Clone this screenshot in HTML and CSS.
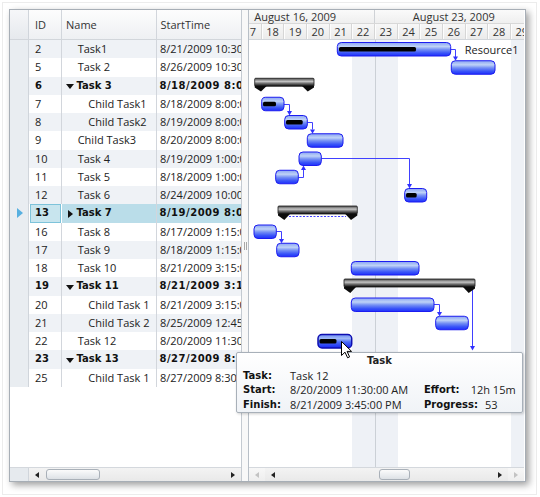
FILE: index.html
```html
<!DOCTYPE html>
<html>
<head>
<meta charset="utf-8">
<link rel="stylesheet" href="styles.css">
</head>
<body>
<div class="page">
  <div class="frame">
    <div class="grid-pane">
      <div class="grid-head">
        <div class="c-sel"></div>
        <div class="c-id">ID</div>
        <div class="c-name hd">Name</div>
        <div class="c-start">StartTime</div>
      </div>
      <div class="grid-body">
        <div class="row alt"><div class="c-sel"></div><div class="c-id">2</div><div class="c-name lv1">Task1</div><div class="c-start">8/21/2009 10:30:00 AM</div></div>
        <div class="row"><div class="c-sel"></div><div class="c-id">5</div><div class="c-name lv1">Task 2</div><div class="c-start">8/26/2009 10:30:00 AM</div></div>
        <div class="row alt sum"><div class="c-sel"></div><div class="c-id">6</div><div class="c-name"><span class="exp open"></span>Task 3</div><div class="c-start">8/18/2009 8:00:00 AM</div></div>
        <div class="row"><div class="c-sel"></div><div class="c-id">7</div><div class="c-name lv2">Child Task1</div><div class="c-start">8/18/2009 8:00:00 AM</div></div>
        <div class="row alt"><div class="c-sel"></div><div class="c-id">8</div><div class="c-name lv2">Child Task2</div><div class="c-start">8/19/2009 8:00:00 AM</div></div>
        <div class="row"><div class="c-sel"></div><div class="c-id">9</div><div class="c-name lv1">Child Task3</div><div class="c-start">8/20/2009 8:00:00 AM</div></div>
        <div class="row alt"><div class="c-sel"></div><div class="c-id">10</div><div class="c-name lv1">Task 4</div><div class="c-start">8/19/2009 1:00:00 PM</div></div>
        <div class="row"><div class="c-sel"></div><div class="c-id">11</div><div class="c-name lv1">Task 5</div><div class="c-start">8/18/2009 1:00:00 PM</div></div>
        <div class="row alt"><div class="c-sel"></div><div class="c-id">12</div><div class="c-name lv1">Task 6</div><div class="c-start">8/24/2009 10:00:00 AM</div></div>
        <div class="row sel sum"><div class="c-sel"><span class="cur"></span></div><div class="c-id focus">13</div><div class="c-name"><span class="exp closed"></span>Task 7</div><div class="c-start">8/19/2009 8:00:00 AM</div></div>
        <div class="row"><div class="c-sel"></div><div class="c-id">16</div><div class="c-name lv1">Task 8</div><div class="c-start">8/17/2009 1:15:00 PM</div></div>
        <div class="row alt"><div class="c-sel"></div><div class="c-id">17</div><div class="c-name lv1">Task 9</div><div class="c-start">8/18/2009 1:15:00 PM</div></div>
        <div class="row"><div class="c-sel"></div><div class="c-id">18</div><div class="c-name lv1">Task 10</div><div class="c-start">8/21/2009 3:15:00 PM</div></div>
        <div class="row alt sum"><div class="c-sel"></div><div class="c-id">19</div><div class="c-name"><span class="exp open"></span>Task 11</div><div class="c-start">8/21/2009 3:15:00 PM</div></div>
        <div class="row"><div class="c-sel"></div><div class="c-id">20</div><div class="c-name lv2">Child Task 1</div><div class="c-start">8/21/2009 3:15:00 PM</div></div>
        <div class="row alt"><div class="c-sel"></div><div class="c-id">21</div><div class="c-name lv2">Child Task 2</div><div class="c-start">8/25/2009 12:45:00 PM</div></div>
        <div class="row"><div class="c-sel"></div><div class="c-id">22</div><div class="c-name lv1">Task 12</div><div class="c-start">8/20/2009 11:30:00 AM</div></div>
        <div class="row alt sum"><div class="c-sel"></div><div class="c-id">23</div><div class="c-name"><span class="exp open"></span>Task 13</div><div class="c-start">8/27/2009 8:30:00 AM</div></div>
        <div class="row"><div class="c-sel"></div><div class="c-id">25</div><div class="c-name lv2">Child Task 1</div><div class="c-start">8/27/2009 8:30:00 AM</div></div>
      </div>
      <div class="grid-scroll">
        <div class="c-sel"></div>
        <div class="hscroll">
          <span class="sbtn"><span class="tri-l"></span></span>
          <div class="track"><div class="thumb t-left"></div></div>
          <span class="sbtn"><span class="tri-r"></span></span>
        </div>
      </div>
    </div>

    <div class="splitter"><span class="grip"></span></div>

    <div class="gantt-pane">
      <div class="g-head">
        <div class="weeks">
          <div class="week">August 16, 2009</div>
          <div class="week">August 23, 2009</div>
        </div>
        <div class="days">
          <div class="day">17</div><div class="day">18</div><div class="day">19</div><div class="day">20</div><div class="day">21</div><div class="day">22</div><div class="day">23</div><div class="day">24</div><div class="day">25</div><div class="day">26</div><div class="day">27</div><div class="day">28</div><div class="day">29</div>
        </div>
      </div>
      <div class="g-body">
        <div class="day-cols">
          <div class="dc"></div><div class="dc"></div><div class="dc"></div><div class="dc"></div><div class="dc"></div><div class="dc we"></div><div class="dc we wk"></div><div class="dc"></div><div class="dc"></div><div class="dc"></div><div class="dc"></div><div class="dc"></div><div class="dc we"></div>
        </div>
        <svg class="chart" width="275" height="427" viewBox="0 0 275 427">
          <defs>
            <linearGradient id="gb" x1="0" y1="0" x2="0" y2="1">
              <stop offset="0" stop-color="#8aa4f2"/>
              <stop offset="0.3" stop-color="#bed2f7"/>
              <stop offset="0.52" stop-color="#7590f4"/>
              <stop offset="0.78" stop-color="#3954f8"/>
              <stop offset="1" stop-color="#1e2ffb"/>
            </linearGradient>
            <linearGradient id="gh" x1="0" y1="0" x2="0" y2="1">
              <stop offset="0" stop-color="#6f8ef5"/>
              <stop offset="0.3" stop-color="#9fb9f6"/>
              <stop offset="0.55" stop-color="#4d6df7"/>
              <stop offset="1" stop-color="#1426f4"/>
            </linearGradient>
            <linearGradient id="gs" x1="0" y1="0" x2="0" y2="1">
              <stop offset="0" stop-color="#4a4a4a"/>
              <stop offset="0.4" stop-color="#c4c4c4"/>
              <stop offset="0.65" stop-color="#6e6e6e"/>
              <stop offset="1" stop-color="#080808"/>
            </linearGradient>
          </defs>

          <g class="conn" fill="none" stroke="#4040ff" stroke-width="1">
            <path d="M201.7 9.5 H206.5 V17"/>
            <path d="M35 64.5 H40.5 V71"/>
            <path d="M58.3 82.5 H63.5 V89.5"/>
            <path d="M72.3 118.5 H160.5 V144"/>
            <path d="M49.3 137.5 H54.5 V130"/>
            <path d="M27.3 191.5 H32.5 V199"/>
            <path d="M185 264.5 H190.5 V272"/>
            <path d="M223.5 247 V306"/>
            <path d="M40 176.5 H97" stroke-dasharray="2 1.5"/>
          </g>
          <g fill="#3030ff">
            <polygon points="204,16.5 209,16.5 206.5,20.75"/>
            <polygon points="38,71 43,71 40.5,75.5"/>
            <polygon points="61,89.5 66,89.5 63.5,93.75"/>
            <polygon points="158,144 163,144 160.5,148.5"/>
            <polygon points="52,130 57,130 54.5,125.5"/>
            <polygon points="30,199 35,199 32.5,203.25"/>
            <polygon points="188,272 193,272 190.5,276.25"/>
            <polygon points="221,306 226,306 223.5,310.5"/>
          </g>

          <g fill="url(#gb)" stroke="#1c1cf0" stroke-width="1">
            <rect x="88.3" y="2.5" width="113.4" height="13.5" rx="4"/>
            <rect x="202.3" y="20.75" width="43.7" height="13.5" rx="4"/>
            <rect x="12.7" y="57.25" width="22.3" height="13.5" rx="4"/>
            <rect x="35.7" y="75.5" width="22.6" height="13.5" rx="4"/>
            <rect x="58.3" y="93.75" width="35.7" height="13.5" rx="4"/>
            <rect x="50" y="112" width="22.3" height="13.5" rx="4"/>
            <rect x="26.7" y="130.25" width="22.6" height="13.5" rx="4"/>
            <rect x="155.7" y="148.5" width="22" height="13.5" rx="4"/>
            <rect x="5" y="185" width="22.3" height="13.5" rx="4"/>
            <rect x="27.7" y="203.25" width="22.3" height="13.5" rx="4"/>
            <rect x="102.3" y="221.5" width="67.7" height="13.5" rx="4"/>
            <rect x="102.3" y="258" width="82.7" height="13.5" rx="4"/>
            <rect x="186.7" y="276.25" width="32.6" height="13.5" rx="4"/>
          </g>
          <rect x="69" y="294.5" width="33.7" height="13.5" rx="4" fill="url(#gh)" stroke="#0e0eb0" stroke-width="1.5"/>

          <g fill="#000">
            <rect x="90" y="7" width="77" height="4.5" rx="1.5"/>
            <rect x="14" y="61.75" width="13" height="4.5" rx="1.5"/>
            <rect x="37" y="80" width="16.7" height="4.5" rx="1.5"/>
            <rect x="157" y="153" width="10.7" height="4.5" rx="1.5"/>
            <rect x="70.5" y="299" width="17" height="4.5" rx="1.5"/>
          </g>

          <g>
            <rect x="5.7" y="38.25" width="59.3" height="8" rx="1" fill="url(#gs)" stroke="#1a1a1a" stroke-width="0.8"/>
            <polygon points="5.7,46 17.7,46 12,51.5 5.7,47.5" fill="#0c0c0c"/>
            <polygon points="65,46 53,46 58.7,51.5 65,47.5" fill="#0c0c0c"/>

            <rect x="29" y="166" width="79.3" height="8" rx="1" fill="url(#gs)" stroke="#1a1a1a" stroke-width="0.8"/>
            <polygon points="29,174 41,174 35.3,180 29,175.5" fill="#0c0c0c"/>
            <polygon points="108.3,174 96.3,174 102,180 108.3,175.5" fill="#0c0c0c"/>

            <rect x="95" y="239" width="131" height="8" rx="1" fill="url(#gs)" stroke="#1a1a1a" stroke-width="0.8"/>
            <polygon points="95,247 107,247 101.3,253 95,248.5" fill="#0c0c0c"/>
            <polygon points="226,247 214,247 219.7,253 226,248.5" fill="#0c0c0c"/>
          </g>

          <text x="215.7" y="14" class="res">Resource1</text>
        </svg>
      </div>
      <div class="g-scroll">
        <span class="sbtn dis"><span class="tri-l"></span></span>
        <div class="hscroll inner">
          <span class="sbtn"><span class="tri-l"></span></span>
          <div class="track"><div class="thumb t-mid"></div></div>
          <span class="sbtn"><span class="tri-r"></span></span>
        </div>
        <span class="sbtn dis"><span class="tri-r"></span></span>
      </div>
    </div>

    <div class="tooltip">
      <div class="tt-title">Task</div>
      <div class="tt-l">Task:</div><div class="tt-v">Task 12</div><div class="tt-pair"></div>
      <div class="tt-l">Start:</div><div class="tt-v">8/20/2009 11:30:00 AM</div><div class="tt-pair"><span class="tt-l2">Effort:</span><span class="tt-v">12h 15m</span></div>
      <div class="tt-l">Finish:</div><div class="tt-v">8/21/2009 3:45:00 PM</div><div class="tt-pair"><span class="tt-l2">Progress:</span><span class="tt-v">53</span></div>
    </div>

    <svg class="cursor" width="14" height="20" viewBox="0 0 14 20">
      <path d="M0.5 0.5 L0.5 14.5 L4 11.2 L6.6 16.8 L8.6 15.9 L6.1 10.4 L10.6 10.4 Z" fill="#fff" stroke="#000" stroke-width="1" stroke-linejoin="round"/>
    </svg>
  </div>
</div>
</body>
</html>
```

FILE: styles.css
```css
* { box-sizing: border-box; }
body {
  margin: 0;
  background: #fff;
  font-family: "Open Sans", "Liberation Sans", sans-serif;
  font-size: 11px;
  color: #222;
}
.page {
  margin: 2px;
  width: 535px;
  height: 493px;
  border: 1px solid #ececec;
  padding: 6px 0 0 6px;
}
.frame {
  position: relative;
  display: flex;
  width: 517px;
  height: 473px;
  border: 1px solid #a7aeb6;
  background: #fff;
  box-shadow: 3px 3px 7px rgba(0, 0, 0, 0.38);
}

/* ---------- left grid ---------- */
.grid-pane {
  width: 232px;
  display: flex;
  flex-direction: column;
  border-right: 1px solid #c4cad1;
}
.grid-head {
  height: 30px;
  flex: none;
  display: flex;
  align-items: stretch;
  background: linear-gradient(#fdfdfd, #eef0f3);
  border-bottom: 1px solid #d2d6db;
  color: #333;
}
.grid-head > div { display: flex; align-items: center; }
.grid-head .c-sel { background: linear-gradient(#f6f7f9, #e6e9ed); }
.c-sel {
  width: 19px;
  flex: none;
  border-right: 1px solid #d0d5db;
  display: flex;
  align-items: center;
}
.c-id {
  width: 33px;
  flex: none;
  padding-left: 6px;
  border-right: 1px solid #d2d6dc;
}
.c-name {
  width: 95px;
  flex: none;
  border-right: 1px solid #d2d6dc;
  display: flex;
  align-items: center;
  padding-left: 4px;
}
.c-name.hd { padding-left: 4px; }
.c-start {
  flex: 1;
  min-width: 0;
  padding-left: 3px;
  white-space: nowrap;
  overflow: hidden;
}
.grid-head .c-start { padding-left: 3.5px; }
.grid-body {
  flex: 1;
  overflow: hidden;
  background: #fff;
}
.row {
  display: flex;
  height: 18.25px;
  line-height: 18.25px;
  white-space: nowrap;
}
.row .c-sel { background: #e9edf1; }
.row.alt > div:not(.c-sel) { background: #eff2f6; }
.c-name.lv1 { padding-left: 15.7px; }
.c-name.lv2 { padding-left: 26.3px; }
.row.sum {
  font-family: "DejaVu Sans", "Liberation Sans", sans-serif;
  font-weight: bold;
  font-size: 10px;
  color: #111;
}
.row.sum .c-start { letter-spacing: 0.5px; padding-left: 2.5px; }
.row.sel > div:not(.c-sel) { background: #badde9; }
.row.sel .c-id.focus {
  background: #c8e5ee;
  border: 1px solid #7dc3da;
  margin: 0 1px 0 1px;
  width: 31px;
  padding-left: 4px;
  line-height: 16.25px;
}
.cur {
  width: 0;
  height: 0;
  margin-left: 7px;
  border-top: 5px solid transparent;
  border-bottom: 5px solid transparent;
  border-left: 6px solid #58b0e0;
}
.exp { flex: none; width: 0; height: 0; margin-top: 2px; }
.exp.open {
  border-left: 4px solid transparent;
  border-right: 4px solid transparent;
  border-top: 5px solid #111;
  margin-right: 2.5px;
}
.exp.closed {
  margin-left: 2px;
  border-top: 4.5px solid transparent;
  border-bottom: 4.5px solid transparent;
  border-left: 5px solid #111;
  margin-right: 3.5px;
}

/* ---------- scrollbars ---------- */
.grid-scroll {
  height: 14px;
  flex: none;
  display: flex;
  border-top: 1px solid #d4d8dd;
}
.grid-scroll .c-sel { background: #e6eaee; }
.hscroll {
  flex: 1;
  display: flex;
  align-items: stretch;
  background: linear-gradient(#f3f3f3, #e9e9e9);
}
.sbtn {
  width: 16px;
  flex: none;
  display: flex;
  align-items: center;
  justify-content: center;
}
.tri-l {
  width: 0; height: 0;
  border-top: 3.5px solid transparent;
  border-bottom: 3.5px solid transparent;
  border-right: 4px solid #222;
}
.tri-r {
  width: 0; height: 0;
  border-top: 3.5px solid transparent;
  border-bottom: 3.5px solid transparent;
  border-left: 4px solid #222;
}
.sbtn.dis .tri-l { border-right-color: #c3c3c3; }
.sbtn.dis .tri-r { border-left-color: #c3c3c3; }
.track {
  flex: 1;
  position: relative;
  display: flex;
  align-items: stretch;
  padding: 1px 0;
}
.thumb {
  border: 1px solid #a9b0b8;
  border-radius: 3px;
  background: linear-gradient(#fbfbfb, #e9ecef 60%, #dde1e5);
}
.t-left { width: 54px; margin-left: 1px; }
.t-mid { width: 31px; margin-left: 98px; }

/* ---------- splitter ---------- */
.splitter {
  width: 7px;
  flex: none;
  background: #f8f8f8;
  border-right: 1px solid #b8bfc7;
  position: relative;
}
.grip {
  position: absolute;
  left: 2px;
  top: 232px;
  width: 3px;
  height: 8px;
  border-left: 1px solid #a8a8a8;
  border-right: 1px solid #a8a8a8;
}

/* ---------- gantt ---------- */
.gantt-pane {
  width: 275px;
  flex: none;
  display: flex;
  flex-direction: column;
  overflow: hidden;
}
.g-head {
  height: 30px;
  flex: none;
  border-bottom: 1px solid #d2d6db;
  color: #333;
  overflow: hidden;
}
.weeks {
  display: flex;
  height: 14px;
  margin-left: -32.7px;
  background: linear-gradient(#fafafa, #efefef);
  border-bottom: 1px solid #d8d8d8;
}
.week {
  width: 158.667px;
  flex: none;
  text-align: center;
  line-height: 14px;
  white-space: nowrap;
  border-right: 1px solid #cfd2d6;
}
.days {
  display: flex;
  height: 15px;
  margin-left: -10px;
  background: linear-gradient(#f7f7f7, #ebebeb);
}
.day {
  width: 22.667px;
  flex: none;
  text-align: center;
  line-height: 15px;
  border-right: 1px solid #d6d6d6;
  box-shadow: inset 1px 0 0 #fdfdfd;
}
.g-body {
  flex: 1;
  position: relative;
  overflow: hidden;
  background: #fff;
}
.day-cols {
  display: flex;
  height: 100%;
  margin-left: -10px;
}
.dc { width: 22.667px; flex: none; }
.dc.we { background: #eef1f6; }
.dc.wk { border-left: 1px solid #cbd0d6; }
.chart {
  position: absolute;
  left: 0;
  top: 0;
}
.res {
  font-family: "Open Sans", "Liberation Sans", sans-serif;
  font-size: 11px;
  fill: #222;
}
.g-scroll {
  height: 14px;
  flex: none;
  display: flex;
  border-top: 1px solid #d4d8dd;
  background: linear-gradient(#f7f7f7, #eeeeee);
}
.g-scroll .hscroll.inner {
  flex: 1;
  background: linear-gradient(#f3f3f3, #e9e9e9);
}

/* ---------- tooltip ---------- */
.tooltip {
  position: absolute;
  left: 226px;
  top: 342px;
  width: 287px;
  height: 61px;
  border: 1px solid #a8b0b9;
  border-radius: 2px;
  background: linear-gradient(#ffffff, #f0f3f7);
  box-shadow: 1px 1px 3px rgba(0, 0, 0, 0.2);
  padding: 0.5px 0 0 6px;
  display: grid;
  grid-template-columns: 47px 134px auto;
  grid-auto-rows: 14.5px;
  align-items: center;
  white-space: nowrap;
  color: #222;
}
.tt-title {
  grid-column: 1 / -1;
  text-align: center;
  font-family: "DejaVu Sans", "Liberation Sans", sans-serif;
  font-weight: bold;
  font-size: 10px;
  padding-right: 6px;
}
.tt-l, .tt-l2 {
  font-family: "DejaVu Sans", "Liberation Sans", sans-serif;
  font-weight: bold;
  font-size: 10px;
  color: #111;
}
.tt-pair { display: flex; align-items: center; }
.tt-l2 { min-width: 46.7px; padding-right: 7px; }

.cursor {
  position: absolute;
  left: 331px;
  top: 330.5px;
}
```
